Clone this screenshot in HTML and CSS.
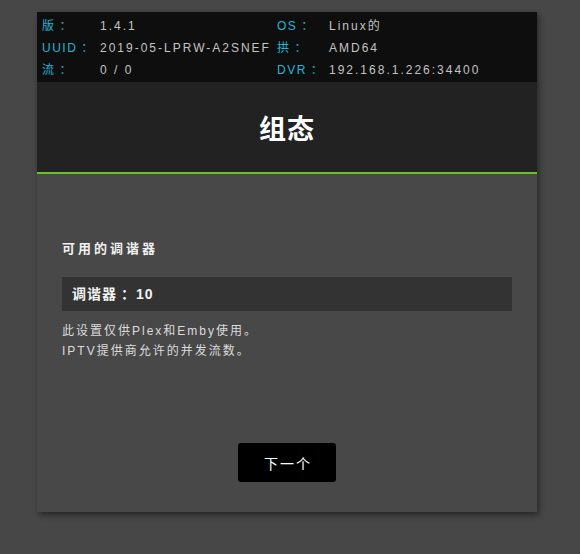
FILE: index.html
```html
<!DOCTYPE html>
<html lang="zh">
<head>
<meta charset="utf-8">
<link rel="stylesheet" href="styles.css">
</head>
<body>
<div class="card">
  <div class="info">
    <div class="info-row">
      <span class="lbl">版<span class="c">：</span></span><span class="val">1.4.1</span>
      <span class="lbl">OS<span class="c">：</span></span><span class="val">Linux的</span>
    </div>
    <div class="info-row">
      <span class="lbl">UUID<span class="c">：</span></span><span class="val">2019-05-LPRW-A2SNEF</span>
      <span class="lbl">拱<span class="c">：</span></span><span class="val">AMD64</span>
    </div>
    <div class="info-row">
      <span class="lbl">流<span class="c">：</span></span><span class="val">0 / 0</span>
      <span class="lbl">DVR<span class="c">：</span></span><span class="val">192.168.1.226:34400</span>
    </div>
  </div>
  <div class="header"><h1 class="title">组态</h1></div>
  <div class="content">
    <div class="section-title">可用的调谐器</div>
    <div class="tuner">调谐器<span class="colon">：</span>10</div>
    <p class="desc">此设置仅供Plex和Emby使用。<br>IPTV提供商允许的并发流数。</p>
    <div class="actions"><button class="next">下一个</button></div>
  </div>
</div>
</body>
</html>
```
FILE: styles.css
```css
html, body { margin: 0; padding: 0; }
body {
  background: #474747;
  font-family: "Liberation Sans", Arial, "Noto Sans CJK SC", sans-serif;
  width: 580px;
  height: 554px;
  overflow: hidden;
}
.card {
  margin: 12px 0 0 37px;
  width: 500px;
  background: #484848;
  box-shadow: 2px 3px 6px rgba(0,0,0,0.45);
}
.info {
  background: #0e0e0e;
  padding: 3px 0 5px 5px;
  height: 62px;
}
.info-row {
  display: grid;
  grid-template-columns: 58px 177px 52px 1fr;
  height: 22px;
  line-height: 22px;
  font-size: 12px;
  letter-spacing: 2px;
}
.lbl {
  color: #27b5d4;
  letter-spacing: 1.5px;
  white-space: nowrap;
}
.lbl .c {
  margin-left: 4px;
}
.val { color: #c4c4c4; }
.header {
  background: #222222;
  height: 90px;
  border-bottom: 2px solid #6cc22c;
  display: flex;
  align-items: center;
  justify-content: center;
}
.title {
  margin: 0;
  color: #ffffff;
  font-size: 27px;
  font-weight: bold;
  font-family: "Noto Sans CJK SC", sans-serif;
  letter-spacing: 1px;
}
.content {
  padding: 64px 25px 30px 25px;
}
.section-title {
  color: #f0f0f0;
  font-size: 13px;
  font-weight: bold;
  line-height: 20px;
  letter-spacing: 3px;
  font-family: "Noto Sans CJK SC", sans-serif;
}
.tuner {
  margin-top: 19px;
  height: 34px;
  line-height: 34px;
  background: #333333;
  color: #f2f2f2;
  font-size: 14px;
  font-weight: bold;
  padding-left: 10px;
  letter-spacing: 1px;
  font-family: "Liberation Sans", "Noto Sans CJK SC", sans-serif;
}
.tuner .colon {
  margin-left: 4px;
}
.desc {
  margin: 10px 0 0 0;
  color: #dcdcdc;
  font-size: 12px;
  line-height: 20px;
  letter-spacing: 2px;
}
.actions {
  display: flex;
  justify-content: center;
  margin-top: 82px;
}
.next {
  width: 98px;
  height: 39px;
  background: #000000;
  color: #ffffff;
  border: none;
  border-radius: 3px;
  font-size: 14px;
  letter-spacing: 2px;
  font-family: "Noto Sans CJK SC", sans-serif;
  padding: 0 0 0 2px;
}
```
